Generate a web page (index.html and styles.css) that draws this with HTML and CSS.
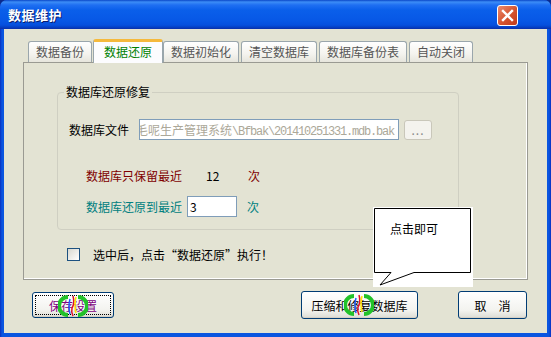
FILE: index.html
```html
<!DOCTYPE html>
<html lang="zh">
<head>
    <meta charset="UTF-8">
    <meta name="viewport" content="width=device-width, initial-scale=1.0">
    <title>数据维护</title>
    <link rel="stylesheet" href="styles.css">
</head>
<body>
    <div class="window">
        <div class="titlebar">
            <span class="title">数据维护</span>
            <button class="close" aria-label="关闭">
                <svg width="13" height="13" viewBox="0 0 13 13">
                    <path d="M2 2 L11 11 M11 2 L2 11" stroke="#fff" stroke-width="2.4" stroke-linecap="square"/>
                </svg>
            </button>
        </div>

        <div class="client">
            <div class="tabs">
                <div class="tab">数据备份</div>
                <div class="tab active">数据还原</div>
                <div class="tab">数据初始化</div>
                <div class="tab">清空数据库</div>
                <div class="tab">数据库备份表</div>
                <div class="tab">自动关闭</div>
            </div>

            <div class="panel">
                <div class="group">
                    <span class="legend">数据库还原修复</span>

                    <div class="row file-row">
                        <span class="file-label">数据库文件</span>
                        <div class="path"><span class="path-text"><span class="cjk">毛呢生产管理系统</span>\Bfbak\201410251331.mdb.bak</span></div>
                        <button class="browse">...</button>
                    </div>

                    <div class="row keep-row">
                        <span class="keep-label">数据库只保留最近</span>
                        <span class="keep-value">12</span>
                        <span>次</span>
                    </div>

                    <div class="row restore-row">
                        <span class="restore-label">数据库还原到最近</span>
                        <div class="count">3</div>
                        <span class="restore-unit">次</span>
                    </div>
                </div>

                <div class="check-row">
                    <span class="checkbox"></span>
                    <span>选中后，点击“数据还原”执行！</span>
                </div>
            </div>

            <div class="buttons">
                <button class="btn save">保存设置
                    <svg class="busy" width="30" height="22" viewBox="0 0 30 22">
                        <path d="M10 2 A9 9 0 0 0 10 20" stroke="#22c22a" stroke-width="4" fill="none"/>
                        <path d="M20 2 A9 9 0 0 1 20 20" stroke="#22c22a" stroke-width="4" fill="none"/>
                        <path d="M12 4 Q10 11 12 19" stroke="#1e5bff" stroke-width="1.5" fill="none"/>
                        <path d="M15 1 Q17 8 14 13 Q13 17 15 21" stroke="#e0102a" stroke-width="1.5" fill="none"/>
                        <path d="M18 2 Q16 10 18 18" stroke="#ffe600" stroke-width="1.5" fill="none"/>
                    </svg>
                </button>
                <button class="btn compact">压缩和修复数据库
                    <svg class="busy" width="30" height="22" viewBox="0 0 30 22">
                        <path d="M10 2 A9 9 0 0 0 10 20" stroke="#22c22a" stroke-width="4" fill="none"/>
                        <path d="M20 2 A9 9 0 0 1 20 20" stroke="#22c22a" stroke-width="4" fill="none"/>
                        <path d="M12 4 Q10 11 12 19" stroke="#1e5bff" stroke-width="1.5" fill="none"/>
                        <path d="M15 1 Q17 8 14 13 Q13 17 15 21" stroke="#e0102a" stroke-width="1.5" fill="none"/>
                        <path d="M18 2 Q16 10 18 18" stroke="#ffe600" stroke-width="1.5" fill="none"/>
                    </svg>
                </button>
                <button class="btn cancel"><span class="spread">取</span>消</button>
            </div>

            <!-- balloon hint over the panel -->
            <div class="balloon">
                <svg width="100" height="80" viewBox="0 0 100 80">
                    <path d="M1.5 1.5 H97.5 V65.5 H41 L7 78 L18 65.5 H1.5 Z" fill="#fff" stroke="#000" stroke-width="1"/>
                </svg>
                <span class="balloon-text">点击即可</span>
            </div>
        </div>
    </div>
</body>
</html>
```

FILE: styles.css
```css
body {
    margin: 0;
    background-color: #0b2a8c;
    font-family: "Noto Sans CJK SC", sans-serif;
    font-size: 12px;
    color: #000;
}

button {
    font-family: inherit;
    font-size: 12px;
    cursor: default;
}

.window {
    width: 551px;
    height: 337px;
    display: flex;
    flex-direction: column;
    background: linear-gradient(90deg, #0a2fbf 0, #0a55e0 2px, #0a55e0 calc(100% - 2px), #0a2fbf 100%);
    border-radius: 7px 7px 0 0;
    overflow: hidden;
}

.titlebar {
    flex: none;
    height: 29px;
    box-sizing: border-box;
    padding: 0 33px 0 8px;
    display: flex;
    align-items: center;
    justify-content: space-between;
    background: linear-gradient(#0a47c8 0, #3c8df6 2px, #1f6ff2 5px, #0a5fea 10px, #0758e6 20px, #0550de 25px, #0442c8 27px, #0a2fa8 29px);
}

.title {
    color: #fff;
    font-weight: bold;
    font-size: 13px;
    line-height: 16px;
    letter-spacing: 0.5px;
    text-shadow: 1px 1px 0 #0a1e6e;
    margin-top: 1px;
}

.close {
    width: 21px;
    height: 21px;
    padding: 0;
    border: 1px solid #fff;
    border-radius: 3px;
    background: linear-gradient(135deg, #ec8a6c, #d4532f 55%, #c13a1a);
    display: flex;
    align-items: center;
    justify-content: center;
    margin-top: 2px;
}

.client {
    position: relative;
    flex: 1;
    margin: 0 4px 4px;
    padding: 10px 0 0 19px;
    background-color: #e3e3d3;
}

/* tabs */
.tabs {
    display: flex;
    align-items: flex-end;
    height: 23px;
    padding-left: 5px;
}

.tab {
    height: 21px;
    box-sizing: border-box;
    padding: 0 7px;
    margin-right: 2px;
    border: 1px solid #9aa6ac;
    border-bottom: none;
    border-radius: 3px 3px 0 0;
    background: linear-gradient(#ffffff, #f4f3ee 60%, #e6e5dc);
    color: #555;
    line-height: 19px;
    white-space: nowrap;
}

.tab.active {
    position: relative;
    z-index: 1;
    height: 24px;
    padding: 0 10px;
    margin: 0 0 -1px -1px;
    border-top: 3px solid #f5b93c;
    background: #fcfcfe;
    color: #008000;
    line-height: 19px;
}

.panel {
    width: 505px;
    height: 218px;
    box-sizing: border-box;
    border: 1px solid #9a9a92;
    box-shadow: inset -1px -1px 0 #fff;
}

/* group box */
.group {
    width: 402px;
    height: 138px;
    box-sizing: border-box;
    margin: 29px 0 0 33px;
    border: 1px solid #cfcfc2;
    border-radius: 4px;
    padding-left: 11px;
}

.legend {
    display: block;
    width: fit-content;
    margin: -9px 0 0 -5px;
    padding: 0 2px;
    line-height: 16px;
    background-color: #e3e3d3;
}

.row {
    display: flex;
    align-items: center;
    height: 21px;
}

.file-row {
    margin-top: 19px;
}

.file-label {
    width: 70px;
}

.path {
    width: 260px;
    height: 21px;
    box-sizing: border-box;
    border: 1px solid #7f9db9;
    background: #fff;
    display: flex;
    align-items: center;
    overflow: hidden;
    white-space: nowrap;
    color: #aca899;
    font-family: "Liberation Mono", "Noto Sans CJK SC", monospace;
    letter-spacing: -1.2px;
}

.path-text {
    margin-left: -4px;
}

.path .cjk {
    font-family: "Noto Sans CJK SC", sans-serif;
    letter-spacing: 0;
}

.browse {
    width: 28px;
    height: 20px;
    margin-left: 5px;
    padding: 0;
    border: 1px solid #c9c7ba;
    border-radius: 3px;
    background: #f4f3ee;
    color: #888;
    letter-spacing: 1px;
}

.keep-row {
    margin-top: 25px;
    padding-left: 17px;
    color: #800000;
}

.keep-label {
    width: 120px;
}

.keep-value {
    width: 42px;
    color: #000;
}

.restore-row {
    margin-top: 10px;
    padding-left: 17px;
    color: #008080;
}

.restore-label {
    width: 101px;
}

.count {
    width: 50px;
    height: 21px;
    box-sizing: border-box;
    border: 1px solid #7f9db9;
    background: #fff;
    color: #000;
    padding-left: 2px;
    line-height: 19px;
}

.restore-unit {
    margin-left: 10px;
}

.check-row {
    display: flex;
    align-items: center;
    margin: 16px 0 0 43px;
    gap: 13px;
}

.checkbox {
    width: 13px;
    height: 13px;
    box-sizing: border-box;
    border: 1px solid #1c5180;
    background: linear-gradient(135deg, #d8d8d0, #fff);
}

/* bottom buttons */
.buttons {
    display: flex;
    align-items: center;
    margin-top: 11px;
}

.btn {
    position: relative;
    height: 28px;
    box-sizing: border-box;
    padding: 0;
    border: 1px solid #003c74;
    border-radius: 3px;
    background: linear-gradient(#ffffff, #f3f3ef 70%, #dcdcd4);
    box-shadow: inset 0 -1px 0 #d6d0c5;
    color: #000;
}

.save {
    width: 82px;
    height: 26px;
    margin-left: 9px;
    color: #800080;
    outline: 1px dotted #000;
    outline-offset: -4px;
}

.compact {
    width: 117px;
    margin-left: 187px;
}

.cancel {
    width: 69px;
    margin-left: 40px;
}

.spread {
    margin-right: 12px;
}

.busy {
    position: absolute;
    top: 2px;
    left: 50%;
    margin-left: -15px;
}

.compact .busy {
    left: 42px;
    margin-left: 0;
}

.balloon {
    position: absolute;
    left: 369px;
    top: 178px;
    width: 100px;
    height: 80px;
    background: #fff;
}

.balloon svg {
    display: block;
}

.balloon-text {
    position: absolute;
    left: 17px;
    top: 14px;
    line-height: 16px;
}
```
